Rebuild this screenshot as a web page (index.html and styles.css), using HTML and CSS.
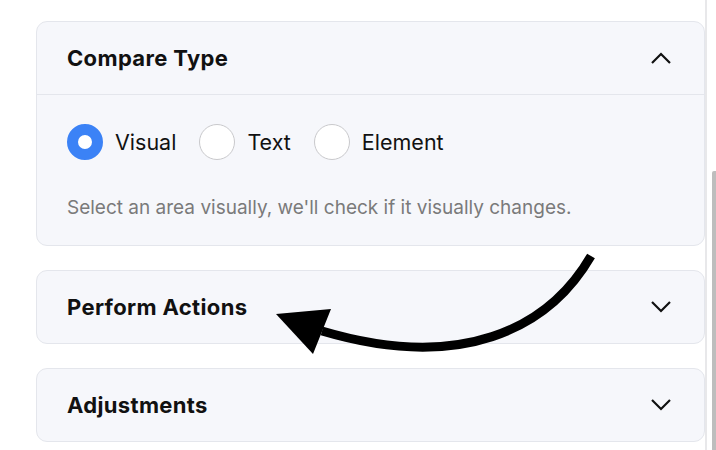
FILE: index.html
```html
<!DOCTYPE html>
<html lang="en">
<head>
  <meta charset="UTF-8">
  <meta name="viewport" content="width=device-width, initial-scale=1.0">
  <title>Monitor settings</title>
  <link rel="stylesheet" href="styles.css">
</head>
<body>
  <div class="page">
    <div class="panel">
      <div class="card open">
        <div class="card-head">
          <h3>Compare Type</h3>
          <svg class="chev" width="22" height="12" viewBox="0 0 22 12"><path d="M2 11 L11 2 L20 11" fill="none" stroke="#111" stroke-width="2.2"/></svg>
        </div>
        <div class="card-body">
          <div class="radios">
            <label class="radio"><span class="dot checked"></span>Visual</label>
            <label class="radio"><span class="dot"></span>Text</label>
            <label class="radio"><span class="dot"></span>Element</label>
          </div>
          <p class="hint">Select an area visually, we'll check if it visually changes.</p>
        </div>
      </div>

      <div class="card">
        <div class="card-head">
          <h3>Perform Actions</h3>
          <svg class="chev" width="22" height="12" viewBox="0 0 22 12"><path d="M2 1 L11 10 L20 1" fill="none" stroke="#111" stroke-width="2.2"/></svg>
        </div>
      </div>

      <div class="card">
        <div class="card-head">
          <h3>Adjustments</h3>
          <svg class="chev" width="22" height="12" viewBox="0 0 22 12"><path d="M2 1 L11 10 L20 1" fill="none" stroke="#111" stroke-width="2.2"/></svg>
        </div>
      </div>
    </div>
    <div class="track"><div class="thumb"></div></div>

    <!-- hand drawn arrow pointing at Perform Actions -->
    <svg class="arrow" width="716" height="450" viewBox="0 0 716 450">
      <path d="M591 256 C 548 330, 460 372, 322 331" fill="none" stroke="#000" stroke-width="9"/>
      <polygon points="276,314 331,309 313,354" fill="#000"/>
    </svg>
  </div>
</body>
</html>
```

FILE: styles.css
```css
body { margin: 0; background: #fff; font-family: Inter, "Noto Sans", sans-serif; color: #111; }
.page { position: relative; display: flex; width: 716px; height: 450px; overflow: hidden; }
.panel { width: 669px; padding: 21px 0 0 36px; border-right: 2px solid #e8e8ea; display: flex; flex-direction: column; gap: 24px; }
.card { background: #f6f7fb; border: 1px solid #e4e6ec; border-radius: 11px; }
.card-head { height: 72px; display: flex; align-items: center; justify-content: space-between; padding: 0 32px 0 30px; }
.card-head h3 { margin: 0; font-size: 22px; font-weight: 700; letter-spacing: 0.35px; }
.open .card-head { border-bottom: 1px solid #e4e6ec; }
.card-body { padding: 29px 30px 0; height: 121px; }
.radios { display: flex; align-items: center; gap: 23px; }
.radio { display: flex; align-items: center; gap: 12px; font-size: 21.5px; }
.dot { width: 34px; height: 34px; border: 1px solid #c9c9cc; border-radius: 50%; background: #fff; box-sizing: content-box; }
.dot.checked { width: 14px; height: 14px; border: 11px solid #3b82f6; background: #fff; }
.hint { margin: 36px 0 0; font-size: 19px; line-height: 23px; color: #7a7a7a; }
.track { width: 9px; display: flex; justify-content: flex-end; }
.thumb { width: 4px; margin-top: 171px; height: 290px; background: #bdbdbd; border-radius: 2px 0 0 0; }
.arrow { position: absolute; left: 0; top: 0; pointer-events: none; }
```
